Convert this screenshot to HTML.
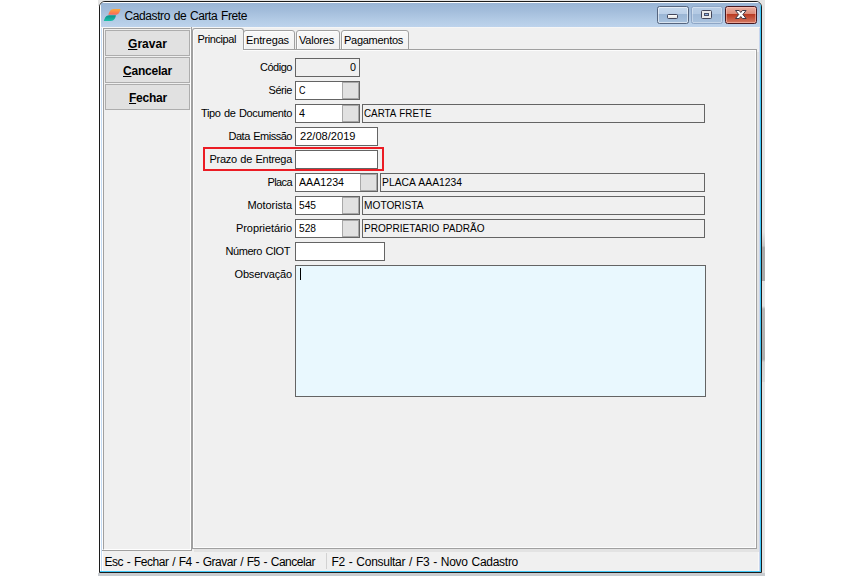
<!DOCTYPE html>
<html><head><meta charset="utf-8"><title>Cadastro de Carta Frete</title>
<style>
html,body{margin:0;padding:0;background:#fff;width:862px;height:576px;overflow:hidden}
body{position:relative;font-family:"Liberation Sans", sans-serif}
.t{position:absolute;white-space:nowrap;font-family:"Liberation Sans", sans-serif}
.a{position:absolute;box-sizing:border-box}

/* shadows */
#shT{left:98px;top:0;width:667px;height:6px;background:#e4e4e4}
#shR{left:757px;top:0;width:8px;height:573px;background:#e4e4e4}
#shB{left:98px;top:573px;width:667px;height:3px;background:#c8ccd0}
#shD1{left:762px;top:232px;width:3px;height:49px;background:linear-gradient(#e4e4e4 0,#c4c4c4 28%,#a9a9a9 32%,#a9a9a9 100%)}
#shD2{left:762px;top:306px;width:3px;height:76px;background:linear-gradient(#e4e4e4 0,#b6b6b6 4%,#adadad 70%,#d2d2d2 74%,#d8d8d8 100%)}
/* window */
#win{left:99px;top:1px;width:663px;height:572px;border:1px solid #1c1c1c;border-radius:6px 6px 0 0;background:#f0f0f0;overflow:hidden}
#title{left:0;top:0;width:661px;height:25px;background:linear-gradient(#98b4d5 0%,#a3bddb 35%,#b4cce6 75%,#bdd3ec 100%)}
#thl{left:0;top:0;width:661px;height:1px;background:#fdfeff}
#fl1{left:0;top:1px;width:1px;height:569px;background:#fff}
#fl2{left:1px;top:26px;width:1px;height:544px;background:#c3daf3}
#fl3{left:2px;top:26px;width:1px;height:544px;background:#fff}
#fr1{left:660px;top:2px;width:1px;height:568px;background:#40c8f8}
#fr2{left:659px;top:26px;width:1px;height:544px;background:#c8d4ec}
#fb1{left:0;top:569px;width:661px;height:1px;background:#40c8f8}
#ctop{left:2px;top:25px;width:657px;height:1px;background:#f6f6f6}

</style></head><body>

<div class="a" id="shT"></div><div class="a" id="shR"></div><div class="a" id="shB"></div><div class="a" id="shD1"></div><div class="a" id="shD2"></div>
<div class="a" id="win">
 <div class="a" id="title"></div><div class="a" id="thl"></div>
 <div class="a" id="fl1"></div><div class="a" id="fl2"></div><div class="a" id="fl3"></div>
 <div class="a" id="fr2"></div><div class="a" id="fr1"></div><div class="a" id="fb1"></div>
 <div class="a" id="ctop"></div>
</div>
<div class="a" style="left:103px;top:28px;width:88px;height:522px;background:#f0f0f0;border:1px solid #a0a0a0;border-right-color:#fff;border-bottom-color:#fff"></div>
<div class="a" style="left:191px;top:27px;width:1px;height:524px;background:#a0a0a0;"></div>
<div class="a" style="left:102px;top:550px;width:90px;height:1px;background:#a0a0a0;"></div>
<div class="a" style="left:105px;top:30px;width:85px;height:26px;background:#e1e1e1;border:1px solid #adadad;"></div>
<div class="a" style="left:105px;top:57px;width:85px;height:26px;background:#e1e1e1;border:1px solid #adadad;"></div>
<div class="a" style="left:105px;top:84px;width:85px;height:26px;background:#e1e1e1;border:1px solid #adadad;"></div>
<div class="a" style="left:192px;top:49px;width:565px;height:500px;background:#f0f0f0;border:1px solid #a0a0a0;box-shadow:inset 0 0 0 1px #fcfcfc, 2px 3px 0 #e3e3e3;"></div>
<div class="a" style="left:243px;top:30px;width:52px;height:20px;background:linear-gradient(#f8f8f8,#f2f2f2);border:1px solid #a0a0a0;border-radius:3px 3px 0 0;box-shadow:inset 1px 1px 0 #fdfdfd;"></div>
<div class="a" style="left:296px;top:30px;width:44px;height:20px;background:linear-gradient(#f8f8f8,#f2f2f2);border:1px solid #a0a0a0;border-radius:3px 3px 0 0;box-shadow:inset 1px 1px 0 #fdfdfd;"></div>
<div class="a" style="left:341px;top:30px;width:68px;height:20px;background:linear-gradient(#f8f8f8,#f2f2f2);border:1px solid #a0a0a0;border-radius:3px 3px 0 0;box-shadow:inset 1px 1px 0 #fdfdfd;"></div>
<div class="a" style="left:192px;top:28px;width:52px;height:22px;background:#f0f0f0;border:1px solid #a0a0a0;border-bottom:none;border-radius:3px 3px 0 0;box-shadow:inset 1px 1px 0 #fafafa;"></div>
<div class="a" style="left:194px;top:50px;width:49px;height:1px;background:#f0f0f0;"></div>
<div class="a" style="left:295px;top:58px;width:65px;height:19px;background:#f0f0f0;border:1px solid #646464;"></div>
<div class="a" style="left:295px;top:81px;width:65px;height:19px;background:#fff;border:1px solid #646464;"></div>
<div class="a" style="left:342px;top:82px;width:17px;height:17px;background:#e1e1e1;border:1px solid #a8a8a8;"></div>
<div class="a" style="left:295px;top:104px;width:65px;height:19px;background:#fff;border:1px solid #646464;"></div>
<div class="a" style="left:342px;top:105px;width:17px;height:17px;background:#e1e1e1;border:1px solid #a8a8a8;"></div>
<div class="a" style="left:362px;top:104px;width:343px;height:19px;background:#f0f0f0;border:1px solid #646464;"></div>
<div class="a" style="left:295px;top:127px;width:83px;height:19px;background:#fff;border:1px solid #646464;"></div>
<div class="a" style="left:295px;top:150px;width:83px;height:19px;background:#fff;border:1px solid #646464;"></div>
<div class="a" style="left:295px;top:173px;width:83px;height:19px;background:#fff;border:1px solid #646464;"></div>
<div class="a" style="left:360px;top:174px;width:17px;height:17px;background:#e1e1e1;border:1px solid #a8a8a8;"></div>
<div class="a" style="left:380px;top:173px;width:325px;height:19px;background:#f0f0f0;border:1px solid #646464;"></div>
<div class="a" style="left:295px;top:196px;width:65px;height:19px;background:#fff;border:1px solid #646464;"></div>
<div class="a" style="left:342px;top:197px;width:17px;height:17px;background:#e1e1e1;border:1px solid #a8a8a8;"></div>
<div class="a" style="left:362px;top:196px;width:343px;height:19px;background:#f0f0f0;border:1px solid #646464;"></div>
<div class="a" style="left:295px;top:219px;width:65px;height:19px;background:#fff;border:1px solid #646464;"></div>
<div class="a" style="left:342px;top:220px;width:17px;height:17px;background:#e1e1e1;border:1px solid #a8a8a8;"></div>
<div class="a" style="left:362px;top:219px;width:343px;height:19px;background:#f0f0f0;border:1px solid #646464;"></div>
<div class="a" style="left:295px;top:242px;width:90px;height:19px;background:#fff;border:1px solid #646464;"></div>
<div class="a" style="left:295px;top:265px;width:411px;height:132px;background:#e9f8fe;border:1px solid #646464;"></div>
<div class="a" style="left:300px;top:268px;width:1px;height:12px;background:#000;"></div>
<div class="a" style="left:203px;top:147px;width:181px;height:24px;border:2px solid #eb1c24"></div>
<div class="a" style="left:326px;top:553px;width:1px;height:16px;background:#d2d2d2;"></div>
<div class="a" style="left:758px;top:552px;width:1px;height:19px;background:#f8f8f8;"></div>
<svg class="a" style="left:100px;top:4px" width="26" height="22" viewBox="100 4 26 22">
<defs>
<linearGradient id="go" x1="0" y1="0" x2="0" y2="1"><stop offset="0" stop-color="#fbab3a"/><stop offset="1" stop-color="#f8665a"/></linearGradient>
<linearGradient id="gt" x1="0" y1="0" x2="0" y2="1"><stop offset="0" stop-color="#0a9088"/><stop offset="1" stop-color="#1cc0aa"/></linearGradient>
</defs>
<path d="M108.3 14.7 C109 12 110.5 8.9 113.6 8.9 L120.4 8.9 C120.1 11.5 118.6 14.7 115.4 14.7 Z" fill="url(#go)"/>
<path d="M103.8 20.9 C104.5 18.2 106 15.2 109.1 15.2 L115.9 15.2 C115.6 17.8 114.1 20.9 110.9 20.9 Z" fill="url(#gt)"/>
</svg>
<div class="a" style="left:657px;top:6px;width:32px;height:18px;border:1px solid #55657f;border-radius:2.5px;background:linear-gradient(#c6d8ec 0%,#bcd0e8 43%,#9ab5d4 46%,#a9c3df 100%);box-shadow:inset 0 0 0 1px rgba(255,255,255,.55)"></div>
<div class="a" style="left:691px;top:6px;width:32px;height:18px;border:1px solid #8ea6c6;border-radius:2.5px;background:linear-gradient(#b9cee6 0%,#b3c9e3 43%,#a0bad8 46%,#a9c2de 100%);box-shadow:inset 0 0 0 1px rgba(255,255,255,.35)"></div>
<div class="a" style="left:725px;top:6px;width:32px;height:18px;border:1px solid #471820;border-radius:2.5px;background:linear-gradient(#e9b0a2 0%,#dc8a78 43%,#b93a22 46%,#d47a64 100%);box-shadow:inset 0 0 0 1px rgba(255,200,190,.55)"></div>
<div class="a" style="left:667px;top:14px;width:11px;height:5px;border:1px solid #43465a;border-radius:1.5px;background:linear-gradient(#fff,#e0e0e0)"></div>
<div class="a" style="left:701px;top:10px;width:11px;height:9px;border:1px solid #43465a;border-radius:1.5px;background:#ebebeb"></div>
<div class="a" style="left:704px;top:13px;width:5px;height:3px;border:1px solid #4a5068;background:#8fb4e4"></div>
<svg class="a" style="left:730px;top:6px" width="22" height="18" viewBox="730 6 22 18">
<path d="M735.5 10.5 L739.2 10.5 L740.8 12.5 L742.4 10.5 L746.1 10.5 L742.9 14.5 L746.1 18.5 L742.4 18.5 L740.8 16.5 L739.2 18.5 L735.5 18.5 L738.7 14.5 Z" fill="#fff" stroke="#3f3a48" stroke-width="1" stroke-linejoin="round"/>
</svg>

<span class='t' style='left:124.50px;top:7.84px;font-size:12px;line-height:16px;word-spacing:0.8px;letter-spacing:-0.404px;font-weight:400;color:#000'>Cadastro de Carta Frete</span>
<span class='t' style='left:128.00px;top:35.84px;font-size:12px;line-height:16px;word-spacing:0.8px;letter-spacing:0.047px;font-weight:700;color:#000'><u>G</u>ravar</span>
<span class='t' style='left:123.00px;top:62.84px;font-size:12px;line-height:16px;word-spacing:0.8px;letter-spacing:-0.213px;font-weight:700;color:#000'><u>C</u>ancelar</span>
<span class='t' style='left:129.00px;top:89.84px;font-size:12px;line-height:16px;word-spacing:0.8px;letter-spacing:-0.229px;font-weight:700;color:#000'><u>F</u>echar</span>
<span class='t' style='left:197.50px;top:31.69px;font-size:11px;line-height:15px;word-spacing:0.8px;letter-spacing:-0.410px;font-weight:400;color:#000'>Principal</span>
<span class='t' style='left:246.00px;top:32.69px;font-size:11px;line-height:15px;word-spacing:0.8px;letter-spacing:-0.129px;font-weight:400;color:#000'>Entregas</span>
<span class='t' style='left:299.00px;top:32.69px;font-size:11px;line-height:15px;word-spacing:0.8px;letter-spacing:-0.212px;font-weight:400;color:#000'>Valores</span>
<span class='t' style='left:344.00px;top:32.69px;font-size:11px;line-height:15px;word-spacing:0.8px;letter-spacing:-0.277px;font-weight:400;color:#000'>Pagamentos</span>
<span class='t' style='left:260.00px;top:59.69px;font-size:11px;line-height:15px;word-spacing:0.8px;letter-spacing:-0.477px;font-weight:400;color:#000'>Código</span>
<span class='t' style='left:268.50px;top:82.69px;font-size:11px;line-height:15px;word-spacing:0.8px;letter-spacing:-0.438px;font-weight:400;color:#000'>Série</span>
<span class='t' style='left:201.00px;top:105.69px;font-size:11px;line-height:15px;word-spacing:0.8px;letter-spacing:-0.365px;font-weight:400;color:#000'>Tipo de Documento</span>
<span class='t' style='left:228.50px;top:128.69px;font-size:11px;line-height:15px;word-spacing:0.8px;letter-spacing:-0.482px;font-weight:400;color:#000'>Data Emissão</span>
<span class='t' style='left:209.50px;top:151.69px;font-size:11px;line-height:15px;word-spacing:0.8px;letter-spacing:-0.295px;font-weight:400;color:#000'>Prazo de Entrega</span>
<span class='t' style='left:267.50px;top:174.69px;font-size:11px;line-height:15px;word-spacing:0.8px;letter-spacing:-0.606px;font-weight:400;color:#000'>Placa</span>
<span class='t' style='left:247.50px;top:197.69px;font-size:11px;line-height:15px;word-spacing:0.8px;letter-spacing:-0.083px;font-weight:400;color:#000'>Motorista</span>
<span class='t' style='left:236.00px;top:220.69px;font-size:11px;line-height:15px;word-spacing:0.8px;letter-spacing:-0.072px;font-weight:400;color:#000'>Proprietário</span>
<span class='t' style='left:225.50px;top:243.69px;font-size:11px;line-height:15px;word-spacing:0.8px;letter-spacing:-0.433px;font-weight:400;color:#000'>Número CIOT</span>
<span class='t' style='left:234.50px;top:266.69px;font-size:11px;line-height:15px;word-spacing:0.8px;letter-spacing:-0.181px;font-weight:400;color:#000'>Observação</span>
<span class='t' style='left:350.00px;top:59.69px;font-size:11px;line-height:15px;word-spacing:0.8px;letter-spacing:0.000px;transform:scaleX(0.9796);transform-origin:0 0;font-weight:400;color:#000'>0</span>
<span class='t' style='left:299.00px;top:82.69px;font-size:11px;line-height:15px;word-spacing:0.8px;letter-spacing:0.000px;transform:scaleX(0.8173);transform-origin:0 0;font-weight:400;color:#000'>C</span>
<span class='t' style='left:299.00px;top:105.69px;font-size:11px;line-height:15px;word-spacing:0.8px;letter-spacing:0.000px;transform:scaleX(0.9796);transform-origin:0 0;font-weight:400;color:#000'>4</span>
<span class='t' style='left:363.50px;top:105.69px;font-size:11px;line-height:15px;word-spacing:0.8px;letter-spacing:0.000px;transform:scaleX(0.8931);transform-origin:0 0;font-weight:400;color:#000'>CARTA FRETE</span>
<span class='t' style='left:299.50px;top:128.69px;font-size:11px;line-height:15px;word-spacing:0.8px;letter-spacing:0.000px;transform:scaleX(1.0079);transform-origin:0 0;font-weight:400;color:#000'>22/08/2019</span>
<span class='t' style='left:299.00px;top:174.69px;font-size:11px;line-height:15px;word-spacing:0.8px;letter-spacing:0.000px;transform:scaleX(0.9681);transform-origin:0 0;font-weight:400;color:#000'>AAA1234</span>
<span class='t' style='left:381.50px;top:174.69px;font-size:11px;line-height:15px;word-spacing:0.8px;letter-spacing:0.000px;transform:scaleX(0.9389);transform-origin:0 0;font-weight:400;color:#000'>PLACA AAA1234</span>
<span class='t' style='left:299.00px;top:197.69px;font-size:11px;line-height:15px;word-spacing:0.8px;letter-spacing:0.000px;transform:scaleX(0.9260);transform-origin:0 0;font-weight:400;color:#000'>545</span>
<span class='t' style='left:363.50px;top:197.69px;font-size:11px;line-height:15px;word-spacing:0.8px;letter-spacing:0.000px;transform:scaleX(0.9243);transform-origin:0 0;font-weight:400;color:#000'>MOTORISTA</span>
<span class='t' style='left:299.00px;top:220.69px;font-size:11px;line-height:15px;word-spacing:0.8px;letter-spacing:0.000px;transform:scaleX(0.9260);transform-origin:0 0;font-weight:400;color:#000'>528</span>
<span class='t' style='left:363.50px;top:220.69px;font-size:11px;line-height:15px;word-spacing:0.8px;letter-spacing:0.000px;transform:scaleX(0.9142);transform-origin:0 0;font-weight:400;color:#000'>PROPRIETARIO PADRÃO</span>
<span class='t' style='left:104.50px;top:553.84px;font-size:12px;line-height:16px;word-spacing:0.8px;letter-spacing:-0.466px;font-weight:400;color:#000'>Esc - Fechar / F4 - Gravar / F5 - Cancelar</span>
<span class='t' style='left:331.50px;top:553.84px;font-size:12px;line-height:16px;word-spacing:0.8px;letter-spacing:-0.281px;font-weight:400;color:#000'>F2 - Consultar / F3 - Novo Cadastro</span>
</body></html>
